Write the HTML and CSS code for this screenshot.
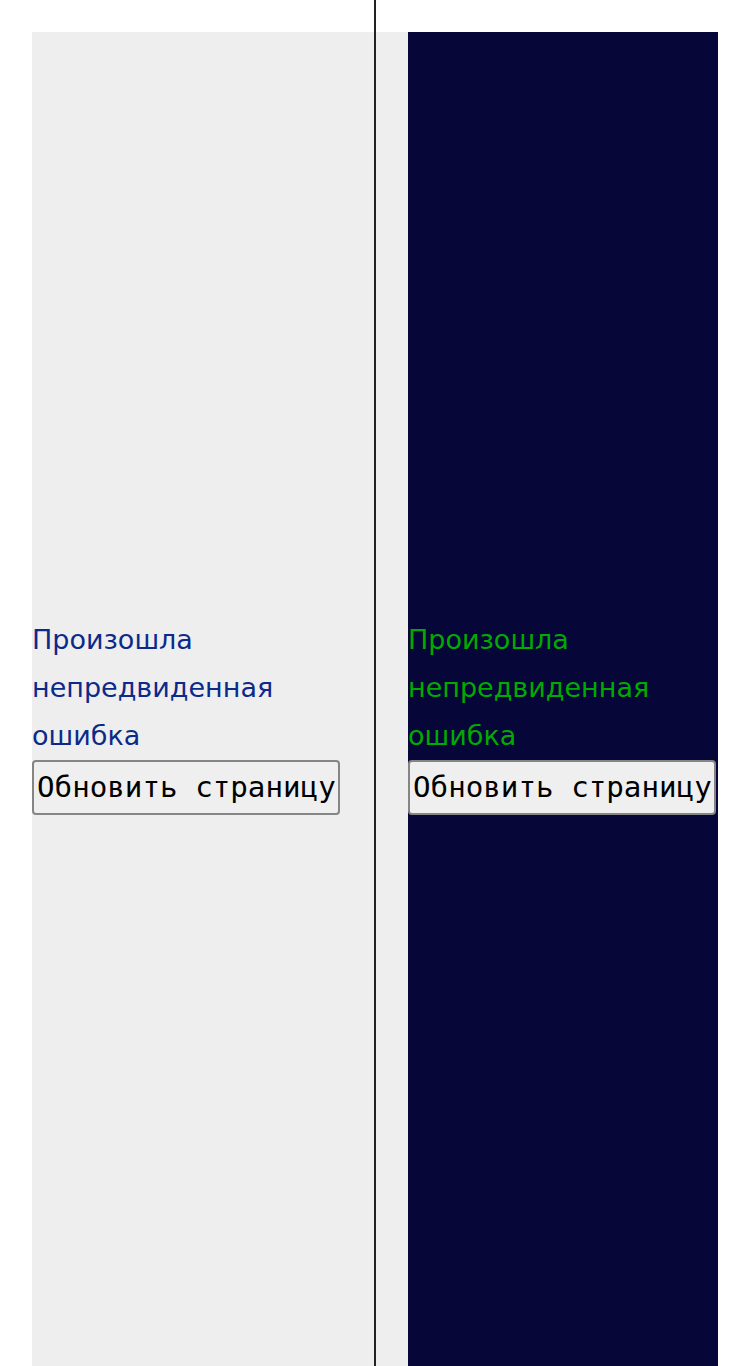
FILE: index.html
```html
<!DOCTYPE html>
<html lang="ru">
<head>
<meta charset="utf-8">
<link rel="stylesheet" href="styles.css">
</head>
<body>
<div class="frame">
  <div class="pane pane-light">
    <div class="error">
      <p class="message">Произошла непредвиденная ошибка</p>
      <button class="reload">Обновить страницу</button>
    </div>
  </div>
  <div class="pane pane-dark">
    <div class="error">
      <p class="message">Произошла непредвиденная ошибка</p>
      <button class="reload">Обновить страницу</button>
    </div>
  </div>
</div>
<div class="divider"></div>
</body>
</html>
```
FILE: styles.css
```css
html, body {
  margin: 0;
  padding: 0;
  background: #ffffff;
}
body {
  padding: 32px 32px 0 32px;
  font-family: "DejaVu Sans", sans-serif;
  overflow: hidden;
}
.frame {
  display: flex;
  justify-content: space-between;
  background: #eeeeee;
  height: 1366px;
}
.pane {
  width: 310px;
  display: flex;
  align-items: center;
}
.pane-dark {
  background: #060638;
}
.error {
  display: flex;
  flex-direction: column;
  align-items: flex-start;
}
.message {
  margin: 0;
  font-size: 27px;
  line-height: 48px;
}
.pane-light .message { color: #0b2a8a; }
.pane-dark .message { color: #00aa00; }
.reload {
  font-family: "DejaVu Sans Mono", monospace;
  font-size: 29.2px;
  line-height: 34px;
  padding: 8px 2px 9px 3px;
  color: #000;
  background: #efefef;
  border: 2px solid #858585;
  border-radius: 4px;
  margin: 0;
}
.divider {
  position: fixed;
  top: 0;
  left: 374px;
  width: 2px;
  height: 100vh;
  background: #222222;
}
```
